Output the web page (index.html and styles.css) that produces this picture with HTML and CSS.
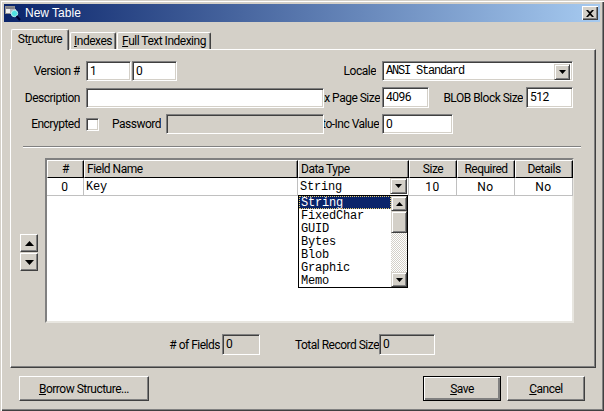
FILE: index.html
```html
<!DOCTYPE html>
<html>
<head>
<meta charset="utf-8">
<title>New Table</title>
<link rel="stylesheet" href="styles.css">
</head>
<body>
<div class="window">
  <div class="titlebar">
    <svg class="app-icon" width="16" height="16" viewBox="0 0 16 16">
      <rect x="0.500" y="1.500" width="9" height="7" fill="#f0f0f0" stroke="#909090"/>
      <rect x="1" y="2" width="8" height="2" fill="#808088"/>
      <rect x="5" y="4" width="6" height="5" fill="#b8b8c0"/>
      <circle cx="9.500" cy="8.500" r="3.200" fill="#50e0e0" stroke="#c0f0f0"/>
      <path d="M11.500 11L15 15" stroke="#000030" stroke-width="2"/>
    </svg>
    <span class="title-text">New Table</span>
    <button class="close-btn"><svg width="8" height="7" viewBox="0 0 8 7"><path d="M0 0h2l2 2 2-2h2L5 3.500 8 7H6L4 5 2 7H0l3-3.500z" fill="#000"/></svg></button>
  </div>
  <div class="tabs">
    <div class="tab active">St<u>r</u>ucture</div>
    <div class="tab t2"><u>I</u>ndexes</div>
    <div class="tab t3"><u>F</u>ull Text Indexing</div>
  </div>
  <div class="panel">
    <div class="row row-1">
      <div class="label w69">Version #</div>
      <div class="input w45 ml6">1</div>
      <div class="input w45 ml1">0</div>
      <div class="label w199">Locale</div>
      <div class="input w191 ml6 combo">ANSI Standard
        <span class="scroll-btn combo-btn"><svg width="7" height="4" viewBox="0 0 7 4"><path d="M0 0h7L3.500 4z"/></svg></span>
      </div>
    </div>
    <div class="row row-2">
      <div class="label w69">Description</div>
      <div class="input w238 ml6 h20"></div>
      <div class="label w56">Max Page Size</div>
      <div class="input w47 ml2">4096</div>
      <div class="label w94">BLOB Block Size</div>
      <div class="input w47 ml3">512</div>
    </div>
    <div class="row row-3">
      <div class="label w69">Encrypted</div>
      <div class="check ml6"></div>
      <div class="label w62">Password</div>
      <div class="input w158 ml5 disabled"></div>
      <div class="label w55">Auto-Inc Value</div>
      <div class="input w71 ml3">0</div>
    </div>
    <div class="separator"></div>
    <div class="fields">
      <div class="movers">
        <button class="mover"><svg width="9" height="5" viewBox="0 0 9 5"><path d="M4.500 0L9 5H0z"/></svg></button>
        <button class="mover"><svg width="9" height="5" viewBox="0 0 9 5"><path d="M0 0h9L4.500 5z"/></svg></button>
      </div>
      <div class="grid">
        <div class="grid-row head">
          <div class="c c1">#</div>
          <div class="c c2 left">Field Name</div>
          <div class="c c3 left">Data Type</div>
          <div class="c c4">Size</div>
          <div class="c c5">Required</div>
          <div class="c c6">Details</div>
        </div>
        <div class="grid-row data">
          <div class="c c1 num">0</div>
          <div class="c c2 left mono">Key</div>
          <div class="c c3 left mono">String
            <span class="scroll-btn cell-btn"><svg width="7" height="4" viewBox="0 0 7 4"><path d="M0 0h7L3.500 4z"/></svg></span>
          </div>
          <div class="c c4 num">10</div>
          <div class="c c5 num">No</div>
          <div class="c c6 num">No</div>
        </div>
        <div class="popup">
          <div class="list">
            <div class="item selected">String</div>
            <div class="item">FixedChar</div>
            <div class="item">GUID</div>
            <div class="item">Bytes</div>
            <div class="item">Blob</div>
            <div class="item">Graphic</div>
            <div class="item">Memo</div>
          </div>
          <div class="scrollbar">
            <span class="scroll-btn sb-btn"><svg width="7" height="4" viewBox="0 0 7 4"><path d="M3.500 0L7 4H0z"/></svg></span>
            <span class="scroll-btn thumb"></span>
            <span class="track"></span>
            <span class="scroll-btn sb-btn"><svg width="7" height="4" viewBox="0 0 7 4"><path d="M0 0h7L3.500 4z"/></svg></span>
          </div>
        </div>
      </div>
    </div>
    <div class="row row-sum">
      <div class="label w209"># of Fields</div>
      <div class="input w38 ml2 disabled">0</div>
      <div class="label w119">Total Record Size</div>
      <div class="input w56 disabled">0</div>
    </div>
  </div>
  <div class="footer">
    <button class="btn w130"><u>B</u>orrow Structure...</button>
    <div class="spacer"></div>
    <button class="btn w78 default"><u>S</u>ave</button>
    <button class="btn w78"><u>C</u>ancel</button>
  </div>
</div>
</body>
</html>
```
FILE: styles.css
```css
* { box-sizing: border-box; }
html, body { margin: 0; padding: 0; }
body {
  width: 604px; height: 411px; overflow: hidden;
  background: #d4d0c8;
  font-family: Roboto, "Liberation Sans", sans-serif;
  font-size: 12px; letter-spacing: -.5px; color: #000;
}
.window {
  width: 604px; height: 411px; padding: 4px;
  background: #d4d0c8;
  box-shadow: inset 1px 1px 0 #d4d0c8, inset 2px 2px 0 #fff, inset -1px -1px 0 #404040, inset -2px -2px 0 #808080;
}
.titlebar {
  height: 18px; display: flex; align-items: center; padding: 0 2px 0 1px;
  background: linear-gradient(90deg, #0a246a, #a6caf0);
  color: #fff;
}
.app-icon { margin-right: 4px; flex: none; }
.title-text { flex: 1; font-family: "Liberation Sans", sans-serif; letter-spacing: 0; }
.close-btn {
  width: 16px; height: 14px; padding: 0; border: 0; display: flex; align-items: center; justify-content: center;
  background: #d4d0c8;
  box-shadow: inset 1px 1px 0 #fff, inset -1px -1px 0 #404040, inset -2px -2px 0 #808080;
}
.tabs { display: flex; align-items: flex-end; height: 20px; margin: 7px 0 0 7px; position: relative; z-index: 1; }
.tab {
  height: 17px; padding-top: 1px; white-space: nowrap; text-align: center;
  border-top: 1px solid #fff; border-left: 1px solid #fff; border-right: 1px solid #404040;
  border-radius: 2px 2px 0 0;
  box-shadow: inset -1px 0 0 #808080;
  margin-right: 1px;
}
.tab.active { width: 58px; height: 21px; margin: 0 1px -1px 0; padding-top: 2px; background: #d4d0c8; }
.t2 { width: 46px; }
.t3 { width: 94px; }
.panel {
  margin-left: 6px; width: 586px; height: 319px;
  border: 1px solid; border-color: #fff #404040 #404040 #fff;
  box-shadow: inset -1px -1px 0 #808080;
  padding-top: 11px;
}
.row { display: flex; align-items: center; height: 20px; }
.row-2 { margin-top: 6px; height: 21px; }
.row-3 { margin-top: 6px; }
.label { white-space: nowrap; overflow: hidden; display: flex; justify-content: flex-end; flex: none; }
.w69 { width: 69px; } .w199 { width: 199px; } .w56 { width: 56px; } .w55 { width: 55px; } .w94 { width: 94px; }
.w62 { width: 62px; } .w209 { width: 209px; } .w119 { width: 119px; }
.w45 { width: 45px; } .w191 { width: 191px; } .w238 { width: 238px; } .w47 { width: 47px; }
.w158 { width: 158px; } .w71 { width: 71px; } .w38 { width: 38px; }
.ml1 { margin-left: 1px; } .ml2 { margin-left: 2px; } .ml3 { margin-left: 3px; } .ml5 { margin-left: 5px; } .ml6 { margin-left: 6px; }
.input {
  flex: none; height: 100%; padding: 2px 3px; line-height: 15px; background: #fff;
  border: 1px solid; border-color: #808080 #fff #fff #808080;
  box-shadow: inset 1px 1px 0 #404040, inset -1px -1px 0 #d4d0c8;
}
.input.h20 { height: 20px; margin-top: 1px; }
.input.disabled { background: #d4d0c8; box-shadow: inset 1px 1px 0 #404040; }
.combo { position: relative; font-family: "Liberation Mono", monospace; letter-spacing: -1.2px; }
.mono { font-family: "Liberation Mono", monospace; letter-spacing: -.2px; }
.num { letter-spacing: .6px; }
.scroll-btn {
  display: flex; align-items: center; justify-content: center; flex: none;
  background: #d4d0c8;
  border: 1px solid; border-color: #d4d0c8 #404040 #404040 #d4d0c8;
  box-shadow: inset 1px 1px 0 #fff, inset -1px -1px 0 #808080;
}
.combo-btn { position: absolute; right: 2px; top: 2px; width: 16px; height: 16px; }
.check {
  width: 13px; height: 13px; flex: none; background: #fff;
  border: 1px solid; border-color: #808080 #fff #fff #808080;
  box-shadow: inset 1px 1px 0 #404040, inset -1px -1px 0 #d4d0c8;
}
.separator {
  margin: 12px 0 0 12px; width: 558px; height: 2px;
  border-top: 1px solid #808080; border-bottom: 1px solid #fff;
}
.fields { display: flex; margin-top: 10px; height: 165px; }
.movers { width: 25px; margin-left: 9px; padding-top: 76px; display: flex; flex-direction: column; gap: 1px; }
.mover {
  width: 18px; height: 18px; padding: 0; display: flex; align-items: center; justify-content: center;
  background: #d4d0c8; border: 1px solid; border-color: #fff #404040 #404040 #fff;
  box-shadow: inset -1px -1px 0 #808080;
}
.grid {
  position: relative; width: 529px; height: 165px; background: #fff;
  border: 2px solid; border-color: #808080 #e8e6e0 #e8e6e0 #808080;
}
.grid-row { display: flex; height: 18px; }
.c { flex: none; text-align: center; line-height: 16px; white-space: nowrap; position: relative; }
.c.left { text-align: left; padding-left: 2px; }
.c1 { width: 37px; } .c2 { width: 214px; } .c3 { width: 111px; } .c4 { width: 48px; } .c5 { width: 58px; } .c6 { width: 58px; }
.head .c { background: #d4d0c8; border: 1px solid; border-color: #fff #000 #000 #fff; box-shadow: inset -1px 0 0 #808080; }
.data .c { border-right: 1px solid #c0c0c0; border-bottom: 1px solid #c0c0c0; line-height: 19px; }
.cell-btn { position: absolute; right: 1px; top: 0; width: 17px; height: 16px; }
.popup {
  position: absolute; left: 251px; top: 35px; width: 110px; height: 93px;
  display: flex; background: #fff; border: 1px solid #000;
}
.list { width: 92px; font-family: "Liberation Mono", monospace; letter-spacing: -.2px; }
.item { height: 13px; line-height: 15px; padding-left: 2px; }
.selected { background: #0a246a; color: #fff; outline: 1px dotted #e8d070; outline-offset: -1px; }
.scrollbar { width: 16px; display: flex; flex-direction: column; }
.sb-btn { height: 15px; }
.thumb { height: 22px; }
.track { flex: 1; background: conic-gradient(#fff 25%, #d4d0c8 0 50%, #fff 0 75%, #d4d0c8 0) 0 0 / 2px 2px; }
.row-sum { margin-top: 11px; height: 21px; }
.footer { display: flex; height: 25px; margin: 8px 0 0 15px; width: 566px; }
.spacer { flex: 1; }
.btn {
  padding: 0; font: inherit; letter-spacing: inherit; color: #000; background: #d4d0c8; height: 25px;
  border: 1px solid; border-color: #fff #404040 #404040 #fff;
  box-shadow: inset -1px -1px 0 #808080;
}
.w130 { width: 130px; }
.w78 { width: 78px; margin-left: 6px; }
.default { outline: 1px solid #000; outline-offset: -1px; box-shadow: inset 1px 1px 0 #fff, inset -2px -2px 0 #808080, inset -1px -1px 0 #404040; }
```
